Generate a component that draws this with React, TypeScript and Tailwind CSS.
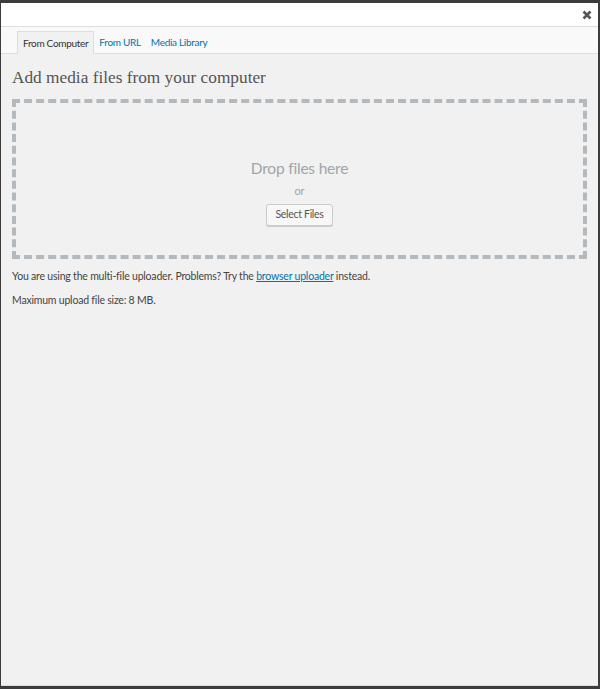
import React from "react";

export default function App() {
  const sans = { fontFamily: 'Lato, "Liberation Sans", sans-serif' };
  return (
    <div className="w-[600px] h-[689px] bg-[#3c3c3c] pt-[3px] pl-[1px] pr-[2px] pb-[3px]" style={sans}>
      <div className="flex h-full flex-col bg-[#f1f1f1] border-b border-[#dcdcdc]">
        <div className="flex h-[24px] items-center justify-end border-b border-[#dddddd] bg-white pr-[6px]">
          <svg width="10" height="10" viewBox="0 0 10 10" className="mt-[1px]">
            <path d="M1.5 1.5 L8.5 8.5 M8.5 1.5 L1.5 8.5" stroke="#555" strokeWidth="2.6" strokeLinecap="butt" />
          </svg>
        </div>
        <div className="flex h-[27px] items-end border-b border-[#dddddd] bg-[#f9f9f9] pl-[16px] text-[10px] tracking-[-0.3px]">
          <div className="relative -mb-[1px] flex h-[23px] items-center border border-b-0 border-[#dddddd] bg-[#f1f1f1] px-[5px] text-[#333]">
            From Computer
          </div>
          <div className="flex h-[22px] items-center px-[5px] text-[#0073aa]">From URL</div>
          <div className="flex h-[22px] items-center px-[5px] text-[#0073aa]">Media Library</div>
        </div>
        <div className="px-[11px]">
          <h3 className="mt-[12px] text-[17.3px] leading-[23px] text-[#555]" style={{ fontFamily: '"Liberation Serif", Georgia, serif' }}>
            Add media files from your computer
          </h3>
          <div className="mt-[10px] flex h-[160px] flex-col items-center border-4 border-dashed border-[#b4b9be]">
            <div className="mt-[54px] text-[15.5px] leading-[22px] tracking-[-0.2px] text-[#a0a5aa]">Drop files here</div>
            <div className="mt-[4px] text-[11px] leading-[16px] text-[#a0a5aa]">or</div>
            <button className="mt-[5px] h-[22px] rounded-[3px] border border-[#cccccc] bg-[#f7f7f7] px-[8px] text-[10.5px] tracking-[-0.3px] text-[#555] shadow-[0_1px_0_#ccc]">
              Select Files
            </button>
          </div>
          <p className="mt-[9px] text-[10.5px] leading-[16px] tracking-[-0.2px] text-[#444]">
            You are using the multi-file uploader. Problems? Try the{" "}
            <span className="text-[#0073aa] underline">browser uploader</span> instead.
          </p>
          <p className="mt-[8px] text-[10.5px] leading-[16px] tracking-[-0.2px] text-[#444]">Maximum upload file size: 8 MB.</p>
        </div>
      </div>
    </div>
  );
}
